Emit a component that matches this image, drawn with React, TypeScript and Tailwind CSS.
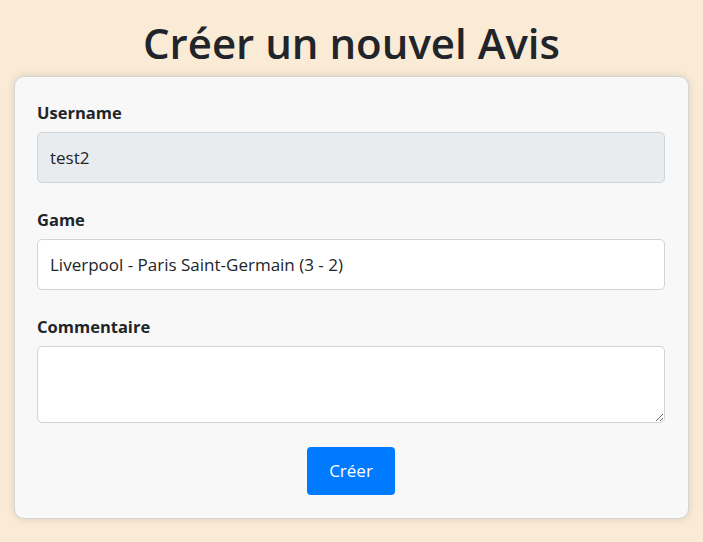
import React from "react";

const font = { fontFamily: '"Open Sans", "Noto Sans", sans-serif' };

export default function App() {
  return (
    <div
      className="min-h-[542px] bg-[#faebd7] px-[14px] pb-[22px] text-[#212529]"
      style={font}
    >
      <h1 className="pt-[14px] text-center text-[42px] font-semibold leading-[58px]">
        Créer un nouvel Avis
      </h1>
      <form className="mt-[4px] flex flex-col rounded-[10px] border border-[#d4d4d4] bg-[#f8f8f8] pl-[22px] pr-[23px] pt-[24px] pb-[23px] shadow-[0_0_8px_rgba(0,0,0,0.12)]">
        <label className="mb-[7px] text-[16.5px] font-bold leading-[24px]">Username</label>
        <input
          readOnly
          value="test2"
          className="h-[51px] rounded-[5px] border border-[#ced4da] bg-[#e9ecef] px-[12px] text-[17px] text-[#212529] outline-none"
        />
        <label className="mt-[25px] mb-[7px] text-[16.5px] font-bold leading-[24px]">Game</label>
        <input
          readOnly
          value="Liverpool - Paris Saint-Germain (3 - 2)"
          className="h-[51px] rounded-[5px] border border-[#ced4da] bg-white px-[12px] text-[17px] text-[#212529] outline-none"
        />
        <label className="mt-[25px] mb-[7px] text-[16.5px] font-bold leading-[24px]">Commentaire</label>
        <textarea className="h-[77px] rounded-[5px] border border-[#ced4da] bg-white px-[12px] py-[6px] text-[17px] outline-none" />
        <div className="mt-[24px] flex justify-center">
          <button
            type="button"
            className="h-[48px] w-[88px] rounded-[4px] bg-[#007bff] text-[17px] text-white"
          >
            Créer
          </button>
        </div>
      </form>
    </div>
  );
}
